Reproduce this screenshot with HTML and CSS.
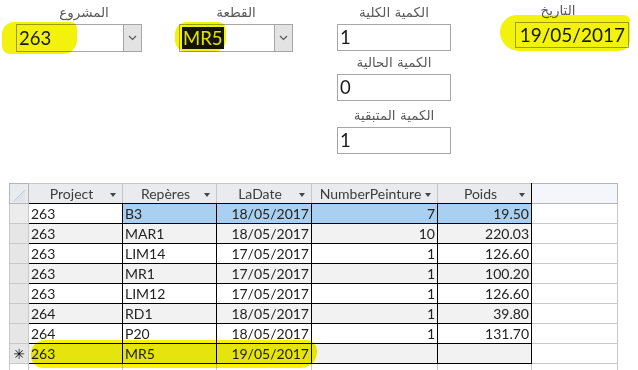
FILE: index.html
```html
<!DOCTYPE html>
<html lang="ar">
  <head>
    <meta charset="UTF-8" />
    <title>Commande peinture</title>
    <link rel="stylesheet" href="styles.css">
  </head>

  <body>
    <div class="page">
      <div class="form">
        <div class="field f-project">
          <div class="label">المشروع</div>
          <div class="combo">
            <span class="value">263</span>
            <span class="drop"><svg width="9" height="6" viewBox="0 0 9 6"><path d="M1 1 L4.5 4.5 L8 1" fill="none" stroke="#555" stroke-width="1.1"/></svg></span>
          </div>
        </div>
        <div class="field f-part">
          <div class="label">القطعة</div>
          <div class="combo">
            <span class="value"><span class="selected">MR5</span></span>
            <span class="drop"><svg width="9" height="6" viewBox="0 0 9 6"><path d="M1 1 L4.5 4.5 L8 1" fill="none" stroke="#555" stroke-width="1.1"/></svg></span>
          </div>
        </div>
        <div class="field f-qty">
          <div class="label">الكمية الكلية</div>
          <div class="box">1</div>
          <div class="label l-second">الكمية الحالية</div>
          <div class="box">0</div>
          <div class="label l-third">الكمية المتبقية</div>
          <div class="box">1</div>
        </div>
        <div class="field f-date">
          <div class="label">التاريخ</div>
          <div class="box date">19/05/2017</div>
        </div>
      </div>

      <table class="grid">
        <colgroup>
          <col style="width:19px">
          <col style="width:94px">
          <col style="width:94px">
          <col style="width:95px">
          <col style="width:126px">
          <col style="width:94px">
          <col style="width:86px">
        </colgroup>
        <thead>
          <tr>
            <th class="sel corner"><svg width="16" height="16" viewBox="0 0 16 16"><polygon points="3,15 15,3 15,15" fill="#dfe3ea"/><line x1="3" y1="15" x2="15" y2="3" stroke="#c5cbd4"/></svg></th>
            <th><div class="head"><span>Project</span><i class="arrow"></i></div></th>
            <th><div class="head"><span>Repères</span><i class="arrow"></i></div></th>
            <th><div class="head"><span>LaDate</span><i class="arrow"></i></div></th>
            <th><div class="head"><span>NumberPeinture</span><i class="arrow"></i></div></th>
            <th><div class="head"><span>Poids</span><i class="arrow"></i></div></th>
            <th class="blank"></th>
          </tr>
        </thead>
        <tbody id="rows"></tbody>
      </table>

      <div class="marker m-project"></div>
      <div class="marker m-part"></div>
      <div class="marker m-date"></div>
      <div class="marker m-row"></div>
    </div>

    <script>
      const rows = [
        ["263", "B3", "18/05/2017", "7", "19.50"],
        ["263", "MAR1", "18/05/2017", "10", "220.03"],
        ["263", "LIM14", "17/05/2017", "1", "126.60"],
        ["263", "MR1", "17/05/2017", "1", "100.20"],
        ["263", "LIM12", "17/05/2017", "1", "126.60"],
        ["264", "RD1", "18/05/2017", "1", "39.80"],
        ["264", "P20", "18/05/2017", "1", "131.70"],
      ];
      const body = document.getElementById("rows");
      let html = "";
      for (let i = 0; i < rows.length; i++) {
        const r = rows[i];
        const cls = i === 0 ? "current" : (i % 2 === 1 ? "alt" : "");
        html += `<tr class="${cls}"><td class="sel"></td>` +
          `<td>${r[0]}</td><td>${r[1]}</td><td class="num">${r[2]}</td>` +
          `<td class="num">${r[3]}</td><td class="num">${r[4]}</td><td class="blank"></td></tr>`;
      }
      html += `<tr class="alt newrow"><td class="sel star">&#x2733;</td><td>263</td><td>MR5</td>` +
        `<td class="num">19/05/2017</td><td></td><td></td><td class="blank"></td></tr>`;
      html += `<tr class="filler"><td class="sel"></td><td></td><td></td><td></td><td></td><td></td><td class="blank"></td></tr>`;
      body.innerHTML = html;
    </script>
  </body>
</html>
```

FILE: styles.css
```css
html, body {
  margin: 0;
  padding: 0;
  background: #fff;
}

.page {
  position: relative;
  width: 638px;
  height: 370px;
  overflow: hidden;
  font-family: Lato, "Liberation Sans", sans-serif;
}

/* ---------- form ---------- */
.form {
  display: flex;
  align-items: flex-start;
  padding: 2px 0 0 16px;
  height: 183px;
  box-sizing: border-box;
}

.field {
  display: flex;
  flex-direction: column;
}

.label {
  height: 22px;
  line-height: 20px;
  text-align: center;
  font-family: "DejaVu Sans", sans-serif;
  font-size: 13.5px;
  color: #5a5a5a;
}

.f-project { width: 126px; }
.f-part { width: 114px; margin-left: 37px; }
.f-qty { width: 114px; margin-left: 44px; }
.f-date { width: 114px; margin-left: 64px; }

.f-project .label { padding-left: 10px; }
.f-part .label { padding-left: 0; }
.f-date .label { height: 20px; line-height: 16px; padding-right: 28px; }

.l-second { height: 23px; line-height: 22px; }
.l-third { height: 26px; line-height: 28px; }

.combo {
  display: flex;
  height: 28px;
  border: 1px solid #a6a6a6;
  box-sizing: border-box;
  background: #fff;
}
.combo .value {
  flex: 1;
  font-size: 18.5px;
  line-height: 26px;
  padding-left: 2px;
  color: #1a1a1a;
}
.combo .drop {
  width: 17px;
  border-left: 1px solid #a6a6a6;
  background: #e3e3e3;
  display: flex;
  align-items: center;
  justify-content: center;
}
.selected {
  display: inline-block;
  background: #141400;
  color: #eded00;
  line-height: 22px;
  padding: 0 1px;
}

.box {
  height: 27px;
  border: 1px solid #a6a6a6;
  box-sizing: border-box;
  font-size: 18.5px;
  line-height: 25px;
  padding-left: 2px;
  color: #1a1a1a;
  background: #fff;
}
.box.date {
  height: 26px;
  text-align: right;
  padding-right: 3px;
  font-size: 19px;
  line-height: 24px;
}

/* ---------- datasheet ---------- */
.grid {
  margin-left: 9px;
  border-collapse: collapse;
  table-layout: fixed;
  width: 608px;
  font-size: 14px;
  color: #222;
}

.grid th, .grid td {
  height: 20px;
  padding: 0 2px;
  box-sizing: border-box;
  border: 1px solid #000;
  white-space: nowrap;
  overflow: hidden;
}

.grid th {
  background: #e9ebef;
  border-color: #c3c6cc;
  border-bottom-color: #000;
  font-weight: normal;
  color: #3c3c3c;
  padding: 0 6px 0 4px;
}
.grid th:nth-child(6) { border-right-color: #000; }
.grid th.blank {
  background: #f4f6fb;
  border-color: #b5b5b5;
}
.grid th.corner {
  padding: 0;
  border-color: #b5b5b5;
  vertical-align: bottom;
}
.grid th.corner svg { display: block; }

.head {
  display: flex;
  align-items: center;
}
.head span {
  flex: 1;
  text-align: center;
}
.arrow {
  width: 0;
  height: 0;
  border-left: 3.5px solid transparent;
  border-right: 3.5px solid transparent;
  border-top: 4px solid #444;
  margin-top: 2px;
}

.grid td.sel {
  background: #e6e6e6;
  border-color: #c8c8c8;
  padding: 0;
}
.grid td.blank {
  background: #fff;
  border-color: #c8c8c8;
}
.grid td.num { text-align: right; }

.grid tr.alt td { background: #f2f2f2; }
.grid tr.alt td.sel { background: #e6e6e6; }
.grid tr.alt td.blank { background: #fff; }

.grid tr.current td { background: #a9cff1; }
.grid tr.current td:nth-child(2) { background: #fff; }
.grid tr.current td.sel { background: #ececec; }
.grid tr.current td.blank { background: #fff; }

.grid td.star {
  text-align: center;
  font-family: "DejaVu Sans", sans-serif;
  font-size: 14px;
  color: #111;
}

.grid tr.filler td {
  height: 10px;
  border-bottom: none;
  border-top-color: #000;
  background: #fff;
}
.grid tr.filler td.sel,
.grid tr.filler td.blank { border-color: #c8c8c8; background: #fff; }
.grid tr.filler td:nth-child(n+2) { border-left-color: #c8c8c8; border-right-color: #c8c8c8; }

/* ---------- highlighter strokes ---------- */
.marker {
  position: absolute;
  background: #f2f200;
  mix-blend-mode: multiply;
  opacity: 0.95;
}
.m-project {
  left: 2px;
  top: 22px;
  width: 75px;
  height: 32px;
  border-radius: 12px 6px 14px 8px;
}
.m-part {
  left: 175px;
  top: 22px;
  width: 51px;
  height: 30px;
  border-radius: 12px 8px 12px 12px;
}
.m-date {
  left: 500px;
  top: 15px;
  width: 130px;
  height: 36px;
  border-radius: 18px 6px 12px 20px;
}
.m-row {
  left: 31px;
  top: 340px;
  width: 286px;
  height: 28px;
  border-radius: 14px 10px 16px 12px;
}
```
